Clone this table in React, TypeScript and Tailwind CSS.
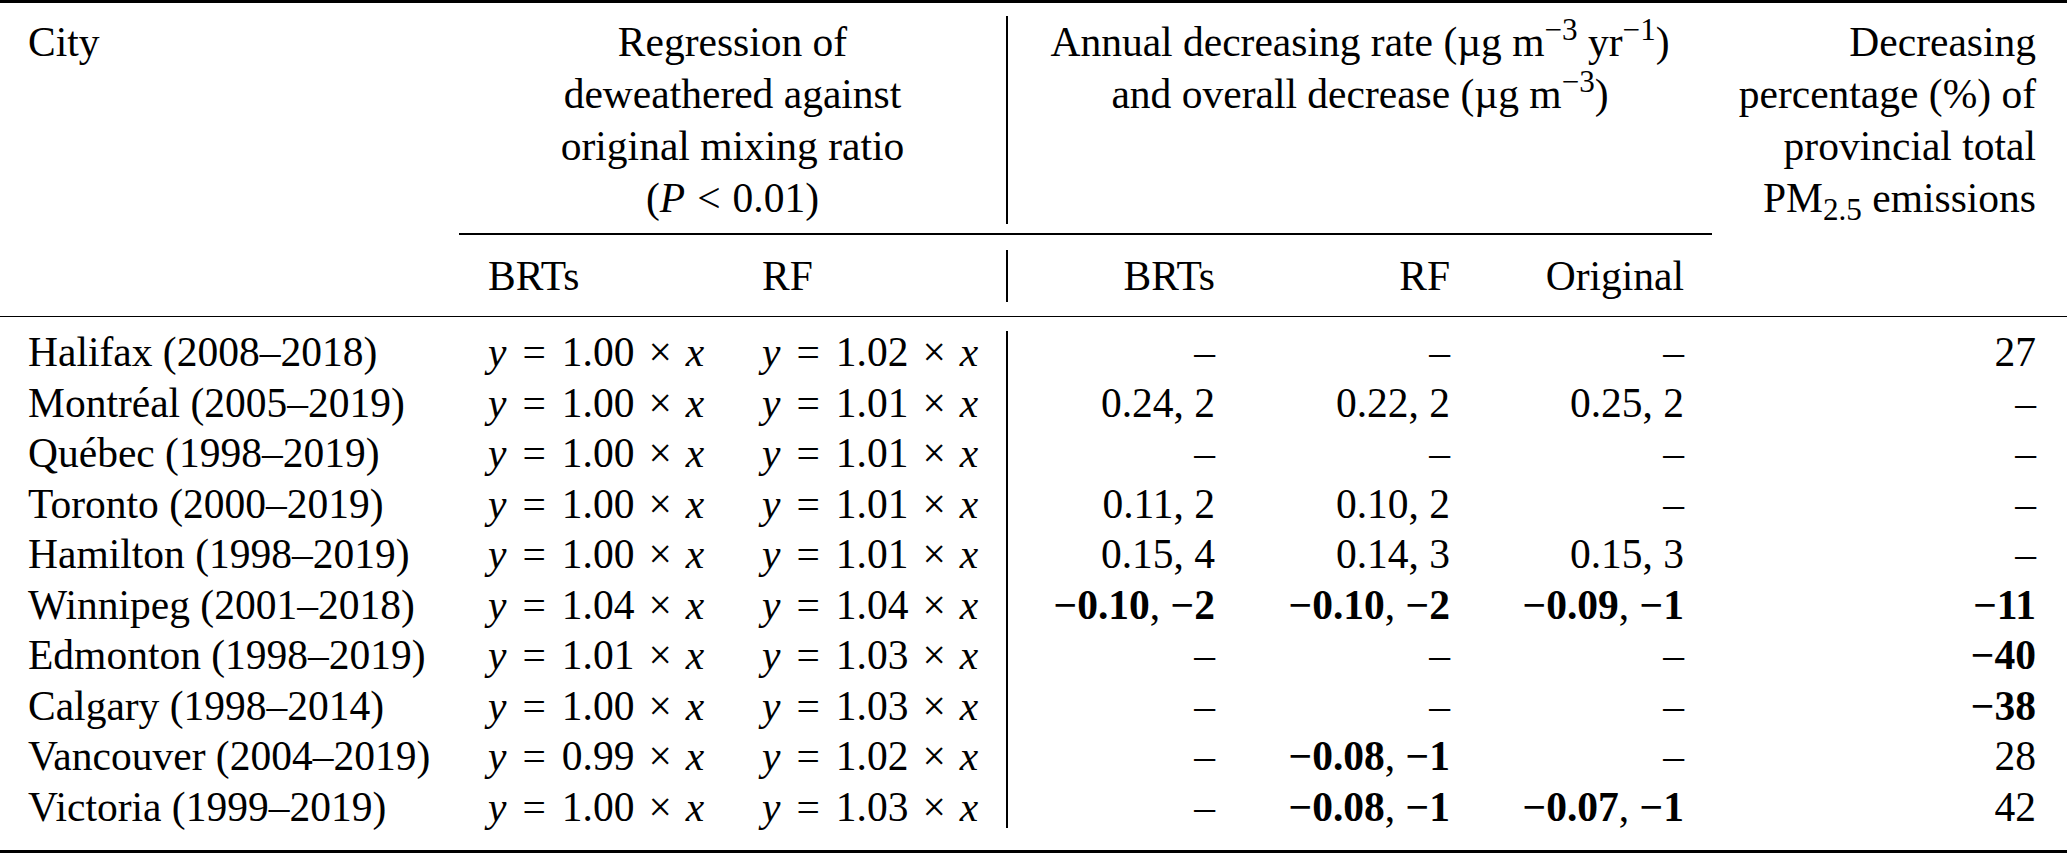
import React from "react";

type Rate = string | { a: string; b: string };

interface Row {
  city: string;
  brt: string;
  rf: string;
  rates: [Rate, Rate, Rate];
  pct: string | { bold: string };
}

const bold = (a: string, b: string): Rate => ({ a, b });

const rows: Row[] = [
  { city: "Halifax (2008–2018)", brt: "1.00", rf: "1.02", rates: ["–", "–", "–"], pct: "27" },
  { city: "Montréal (2005–2019)", brt: "1.00", rf: "1.01", rates: ["0.24, 2", "0.22, 2", "0.25, 2"], pct: "–" },
  { city: "Québec (1998–2019)", brt: "1.00", rf: "1.01", rates: ["–", "–", "–"], pct: "–" },
  { city: "Toronto (2000–2019)", brt: "1.00", rf: "1.01", rates: ["0.11, 2", "0.10, 2", "–"], pct: "–" },
  { city: "Hamilton (1998–2019)", brt: "1.00", rf: "1.01", rates: ["0.15, 4", "0.14, 3", "0.15, 3"], pct: "–" },
  {
    city: "Winnipeg (2001–2018)",
    brt: "1.04",
    rf: "1.04",
    rates: [bold("−0.10", "−2"), bold("−0.10", "−2"), bold("−0.09", "−1")],
    pct: { bold: "−11" },
  },
  { city: "Edmonton (1998–2019)", brt: "1.01", rf: "1.03", rates: ["–", "–", "–"], pct: { bold: "−40" } },
  { city: "Calgary (1998–2014)", brt: "1.00", rf: "1.03", rates: ["–", "–", "–"], pct: { bold: "−38" } },
  { city: "Vancouver (2004–2019)", brt: "0.99", rf: "1.02", rates: ["–", bold("−0.08", "−1"), "–"], pct: "28" },
  {
    city: "Victoria (1999–2019)",
    brt: "1.00",
    rf: "1.03",
    rates: ["–", bold("−0.08", "−1"), bold("−0.07", "−1")],
    pct: "42",
  },
];

// y = k × x, with math-style spacing around the operators
const Eq = ({ k }: { k: string }) => (
  <span>
    <i>y</i>
    <span className="mx-[16px]">=</span>
    {k}
    <span className="mx-[14px]">×</span>
    <i>x</i>
  </span>
);

const RateCell = ({ r }: { r: Rate }) =>
  typeof r === "string" ? (
    <span>{r}</span>
  ) : (
    <span>
      <b>{r.a}</b>, <b>{r.b}</b>
    </span>
  );

export default function App() {
  return (
    <div className="w-[2067px] h-[855px] bg-white text-black font-['Liberation_Serif',serif] text-[41.5px] overflow-hidden">
      {/* top rule */}
      <div className="h-[3px] bg-black" />

      {/* header */}
      <div className="flex pt-[13px] leading-[52px]">
        <div className="w-[459px] pl-[28px]">City</div>
        <div className="w-[1253px] flex flex-col">
          <div className="flex">
            <div className="w-[547px] text-center">
              Regression of
              <br />
              deweathered against
              <br />
              original mixing ratio
              <br />
              (<i>P</i>
              <span className="mx-[12px]">&lt;</span>0.01)
            </div>
            <div className="w-[2px] bg-black" />
            <div className="w-[704px] text-center">
              Annual decreasing rate (µg m<sup>−3</sup> yr<sup>−1</sup>)
              <br />
              and overall decrease (µg m<sup>−3</sup>)
            </div>
          </div>
          <div className="mt-[9px] h-[1.5px] bg-black" />
          <div className="flex mt-[15px]">
            <div className="w-[274px] pl-[29px]">BRTs</div>
            <div className="w-[273px] pl-[29px]">RF</div>
            <div className="w-[2px] bg-black" />
            <div className="w-[235px] pr-[28px] text-right">BRTs</div>
            <div className="w-[235px] pr-[28px] text-right">RF</div>
            <div className="w-[234px] pr-[28px] text-right">Original</div>
          </div>
        </div>
        <div className="w-[355px] pr-[31px] text-right">
          Decreasing
          <br />
          percentage (%) of
          <br />
          provincial total
          <br />
          PM<sub>2.5</sub> emissions
        </div>
      </div>

      {/* mid rule */}
      <div className="mt-[14px] h-[1.5px] bg-black" />

      {/* body */}
      <div className="flex pt-[10px] pb-[18px] leading-[50.5px]">
        <div className="w-[459px] pl-[28px] flex flex-col">
          {rows.map((r) => (
            <div key={r.city}>{r.city}</div>
          ))}
        </div>
        <div className="w-[274px] pl-[29px] flex flex-col">
          {rows.map((r) => (
            <div key={r.city}>
              <Eq k={r.brt} />
            </div>
          ))}
        </div>
        <div className="w-[273px] pl-[29px] flex flex-col">
          {rows.map((r) => (
            <div key={r.city}>
              <Eq k={r.rf} />
            </div>
          ))}
        </div>
        <div className="w-[2px] my-[4px] bg-black" />
        {[0, 1, 2].map((c) => (
          <div key={c} className={c === 2 ? "w-[234px] pr-[28px] text-right flex flex-col" : "w-[235px] pr-[28px] text-right flex flex-col"}>
            {rows.map((r) => (
              <div key={r.city}>
                <RateCell r={r.rates[c]} />
              </div>
            ))}
          </div>
        ))}
        <div className="w-[355px] pr-[31px] text-right flex flex-col">
          {rows.map((r) => (
            <div key={r.city}>{typeof r.pct === "string" ? r.pct : <b>{r.pct.bold}</b>}</div>
          ))}
        </div>
      </div>

      {/* bottom rule */}
      <div className="h-[3px] bg-black" />
    </div>
  );
}
